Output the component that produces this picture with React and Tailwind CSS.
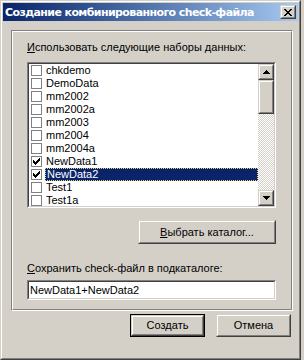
const items = [
  { name: "chkdemo" },
  { name: "DemoData" },
  { name: "mm2002" },
  { name: "mm2002a" },
  { name: "mm2003" },
  { name: "mm2004" },
  { name: "mm2004a" },
  { name: "NewData1", checked: true },
  { name: "NewData2", checked: true, selected: true },
  { name: "Test1" },
  { name: "Test1a" },
];

const font = "font-['Liberation_Sans',Arial,sans-serif]";

function Raised({ className = "", children }) {
  return (
    <div className={`border border-t-[#d4d0c8] border-l-[#d4d0c8] border-r-[#404040] border-b-[#404040] ${className}`}>
      <div className="flex h-full w-full items-center justify-center border border-t-white border-l-white border-r-[#808080] border-b-[#808080] bg-[#d4d0c8]">
        {children}
      </div>
    </div>
  );
}

function Sunken({ className = "", children }) {
  return (
    <div className={`border border-t-[#808080] border-l-[#808080] border-r-white border-b-white ${className}`}>
      <div className="h-full w-full border border-t-[#404040] border-l-[#404040] border-r-[#d4d0c8] border-b-[#d4d0c8] bg-white">
        {children}
      </div>
    </div>
  );
}

function Check() {
  return (
    <svg width="7" height="7" viewBox="0 0 7 7" shapeRendering="crispEdges">
      <path d="M6 0h1v3H6zM5 1h1v3H5zM4 2h1v3H4zM3 3h1v3H3zM2 4h1v3H2zM1 3h1v3H1zM0 2h1v3H0z" fill="#000" />
    </svg>
  );
}

function Arrow({ down }) {
  return (
    <svg width="7" height="4" viewBox="0 0 7 4" shapeRendering="crispEdges">
      {down ? (
        <path d="M0 0h7v1H0zM1 1h5v1H1zM2 2h3v1H2zM3 3h1v1H3z" fill="#000" />
      ) : (
        <path d="M3 0h1v1H3zM2 1h3v1H2zM1 2h5v1H1zM0 3h7v1H0z" fill="#000" />
      )}
    </svg>
  );
}

function ListRow({ item }) {
  return (
    <div className="flex h-[13px] items-center">
      <div className="ml-[2px] flex h-[11px] w-[11px] shrink-0 items-center justify-center border border-[#808080] bg-white">
        {item.checked && <Check />}
      </div>
      <div
        className={`ml-[3px] flex h-[13px] flex-1 items-center pl-[1px] ${
          item.selected ? "border border-dotted border-[#e8d070] bg-[#0a246a] text-white" : "text-black"
        }`}
      >
        {item.name}
      </div>
    </div>
  );
}

function Button({ children, isDefault, className = "" }) {
  const inner = (
    <Raised className="h-full w-full">
      <span className="text-[11px] leading-[13px] text-black">{children}</span>
    </Raised>
  );
  if (isDefault) {
    return <div className={`border border-black ${className}`}>{inner}</div>;
  }
  return <div className={className}>{inner}</div>;
}

export default function App() {
  return (
    <div className={`flex h-[360px] w-[304px] bg-[#d4d0c8] ${font}`}>
      <div className="h-[360px] w-[301px] border border-t-[#d4d0c8] border-l-[#d4d0c8] border-r-[#404040] border-b-[#404040]">
        <div className="flex h-full flex-col border border-t-white border-l-white border-r-[#808080] border-b-[#808080] p-px">
          <div className="flex h-[18px] shrink-0 items-center justify-between bg-gradient-to-r from-[#0a246a] to-[#a6caf0] pl-[2px] pr-[2px]">
            <span className="font-['DejaVu_Sans',sans-serif] text-[11px] font-bold leading-[13px] tracking-[-0.6px] text-white">
              Создание комбинированного check-файла
            </span>
            <Raised className="h-[14px] w-[16px]">
              <svg width="8" height="7" viewBox="0 0 8 7" shapeRendering="crispEdges">
                <path d="M0 0h2v1H0zM6 0h2v1H6zM1 1h2v1H1zM5 1h2v1H5zM2 2h4v1H2zM3 3h2v1H3zM2 4h4v1H2zM1 5h2v1H1zM5 5h2v1H5zM0 6h2v1H0zM6 6h2v1H6z" fill="#000" />
              </svg>
            </Raised>
          </div>

          <div className="flex flex-col pl-[8px] pt-[9px]">
            <div className="h-[281px] w-[282px] border border-t-[#808080] border-l-[#808080] border-r-white border-b-white">
              <div className="flex h-full flex-col border border-t-white border-l-white border-r-[#808080] border-b-[#808080] pl-[14px] pt-[9px] text-[11px] leading-[13px] text-black">
                <div className="h-[13px]">
                  <span className="underline">И</span>спользовать следующие наборы данных:
                </div>

                <Sunken className="mt-[8px] h-[146px] w-[249px]">
                  <div className="flex h-full">
                    <div className="flex-1 overflow-hidden">
                      {items.map((item) => (
                        <ListRow key={item.name} item={item} />
                      ))}
                    </div>
                    <div className="flex w-[16px] flex-col">
                      <Raised className="h-[16px] w-[16px]">
                        <Arrow />
                      </Raised>
                      <Raised className="h-[34px] w-[16px]" />
                      <div className="flex-1 bg-[repeating-conic-gradient(#d4d0c8_0%_25%,#ffffff_0%_50%)] bg-[length:2px_2px]" />
                      <Raised className="h-[16px] w-[16px]">
                        <Arrow down />
                      </Raised>
                    </div>
                  </div>
                </Sunken>

                <Button className="ml-[111px] mt-[12px] h-[24px] w-[138px]">
                  <span className="underline">В</span>ыбрать каталог...
                </Button>

                <div className="mt-[18px] h-[13px]">
                  <span className="underline">С</span>охранить check-файл в подкаталоге:
                </div>

                <Sunken className="mt-[5px] h-[20px] w-[249px]">
                  <div className="flex h-full items-center pl-[1px]">NewData1+NewData2</div>
                </Sunken>
              </div>
            </div>

            <div className="mt-[3px] flex gap-[11px] pl-[119px]">
              <Button isDefault className="h-[23px] w-[75px]">Создать</Button>
              <Button className="h-[23px] w-[75px]">Отмена</Button>
            </div>
          </div>
        </div>
      </div>
    </div>
  );
}
